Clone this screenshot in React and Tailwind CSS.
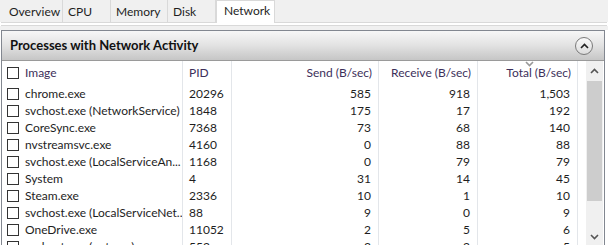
import React from 'react';

const tabs = [
  { label: 'Overview', w: 'w-[59px]' },
  { label: 'CPU', w: 'w-[48px]' },
  { label: 'Memory', w: 'w-[57px]' },
  { label: 'Disk', w: 'w-[48px]' },
];

const rows = [
  ['chrome.exe', '20296', '585', '918', '1,503'],
  ['svchost.exe (NetworkService)', '1848', '175', '17', '192'],
  ['CoreSync.exe', '7368', '73', '68', '140'],
  ['nvstreamsvc.exe', '4160', '0', '88', '88'],
  ['svchost.exe (LocalServiceAn...', '1168', '0', '79', '79'],
  ['System', '4', '31', '14', '45'],
  ['Steam.exe', '2336', '10', '1', '10'],
  ['svchost.exe (LocalServiceNet...', '88', '9', '0', '9'],
  ['OneDrive.exe', '11052', '2', '5', '6'],
  ['svchost.exe (netsvcs)', '552', '3', '2', '5'],
];

const Check = () => <div className="w-[12px] h-[12px] border border-[#333] bg-white shrink-0" />;

const Chevron = ({ down, className }) => (
  <svg width="9" height="6" viewBox="0 0 9 6" className={className}>
    <path d={down ? 'M1 1 L4.5 4.5 L8 1' : 'M1 5 L4.5 1.5 L8 5'} fill="none" stroke="currentColor" strokeWidth="1.6" />
  </svg>
);

export default function App() {
  return (
    <div className="w-[608px] h-[245px] overflow-hidden bg-white text-[12px] text-[#1e1e1e] font-['Lato',sans-serif]">
      {/* tabs */}
      <div className="flex h-[22px] bg-[#f0f0f0] pl-[4px]">
        {tabs.map((t) => (
          <div key={t.label} className={`${t.w} h-full border-r border-[#d9d9d9] pl-[5px] pt-[4px] leading-[16px]`}>
            {t.label}
          </div>
        ))}
        <div className="w-[59px] h-[23px] bg-white border border-b-0 border-[#d9d9d9] pl-[7px] pt-[2px] leading-[16px] z-10">
          Network
        </div>
      </div>
      <div className="border-t border-[#d9d9d9] h-[4px] bg-white border-b mx-[1px]" />
      <div className="h-[4px] bg-[#f0f0f0]" />

      {/* panel */}
      <div className="ml-[1px] mr-[3px] border-l border-t border-r border-[#828790]">
        <div className="h-[30px] flex items-center justify-between pl-[8px] pr-[11px] bg-gradient-to-b from-[#f7f7f7] via-[#e2e2e2] to-[#c6c6c6] border-b border-[#9a9a9a]">
          <span className="font-bold text-[13px] text-[#111]">Processes with Network Activity</span>
          <div className="w-[18px] h-[18px] rounded-full border border-[#7a7a7a] bg-gradient-to-b from-[#fafafa] to-[#dcdcdc] flex items-center justify-center text-[#222]">
            <Chevron />
          </div>
        </div>

        <div className="flex h-[184px]">
          <div className="w-[576px] shrink-0">
            {/* column header */}
            <div className="grid grid-cols-[181px_49px_147px_99px_100px] h-[24px] items-center text-[#3d2f5a]">
              <div className="flex items-center pl-[5px] gap-[6px] h-full border-r border-[#e3e6ea]">
                <Check />
                <span>Image</span>
              </div>
              <div className="pl-[6px] h-full flex items-center border-r border-[#e3e6ea]">PID</div>
              <div className="pr-[6px] h-full flex items-center justify-end border-r border-[#e3e6ea]">Send (B/sec)</div>
              <div className="pr-[6px] h-full flex items-center justify-end border-r border-[#e3e6ea]">Receive (B/sec)</div>
              <div className="relative pr-[6px] h-full flex items-center justify-end border-r border-[#e3e6ea]">
                <Chevron down className="absolute top-[0px] left-[47px] text-[#999]" />
                Total (B/sec)
              </div>
            </div>
            {rows.map((r) => (
              <div key={r[0]} className="grid grid-cols-[181px_49px_147px_99px_100px] h-[17px] items-center">
                <div className="flex items-center pl-[5px] gap-[6px] h-full border-r border-[#e3e6ea] whitespace-nowrap overflow-hidden">
                  <Check />
                  <span>{r[0]}</span>
                </div>
                <div className="pl-[6px] h-full flex items-center border-r border-[#e3e6ea]">{r[1]}</div>
                <div className="pr-[7px] h-full flex items-center justify-end border-r border-[#e3e6ea]">{r[2]}</div>
                <div className="pr-[7px] h-full flex items-center justify-end border-r border-[#e3e6ea]">{r[3]}</div>
                <div className="pr-[7px] h-full flex items-center justify-end border-r border-[#e3e6ea]">{r[4]}</div>
              </div>
            ))}
          </div>
          <div className="w-[8px] shrink-0" />
          {/* scrollbar */}
          <div className="w-[17px] shrink-0 h-full bg-[#f0f0f0] flex flex-col items-center">
            <div className="h-[20px] shrink-0 flex items-center justify-center text-[#555]">
              <Chevron />
            </div>
            <div className="w-[15px] h-[120px] shrink-0 bg-[#cdcdcd]" />
            <div className="h-[28px] shrink-0" />
            <div className="h-[16px] shrink-0 w-full flex items-center justify-center text-[#555]">
              <svg width="9" height="6" viewBox="0 0 9 6">
                <path d="M1 1 L4.5 4.5 L8 1" fill="none" stroke="#555" strokeWidth="1.6" />
              </svg>
            </div>
          </div>
        </div>
      </div>
    </div>
  );
}
